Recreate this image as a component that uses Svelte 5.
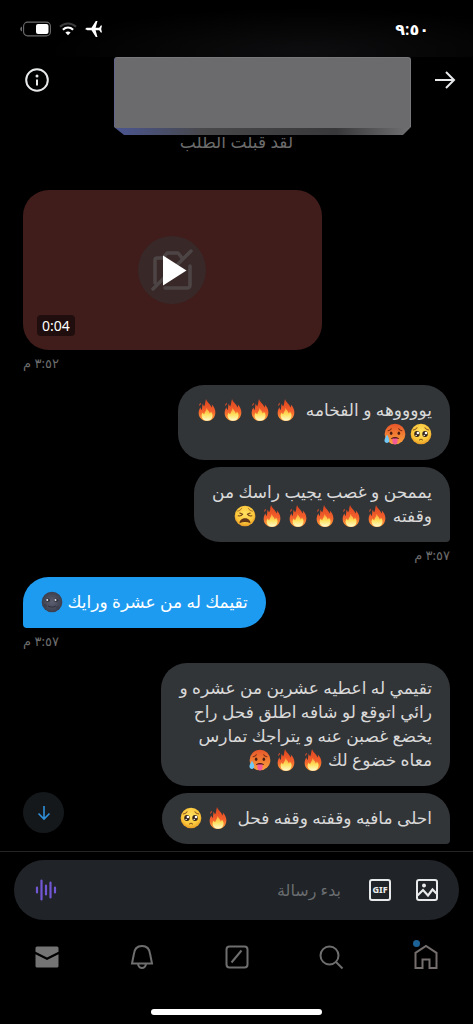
<script lang="ts">
  type Message = {
    side: 'sent' | 'received';
    lines: string[];
    time?: string;
  };

  const messages: Message[] = [
    { side: 'received', lines: ['يووووهه و الفخامه \u00a0🔥 🔥 🔥 🔥', '🥺 🥵'] },
    {
      side: 'received',
      lines: ['يممحن و غصب يجيب راسك من', 'وقفته 🔥 🔥 🔥 🔥 🔥 😩'],
      time: '٣:٥٧ م'
    },
    { side: 'sent', lines: ['تقيمك له من عشرة ورايك 🌚'], time: '٣:٥٧ م' },
    {
      side: 'received',
      lines: [
        'تقيمي له اعطيه عشرين من عشره و',
        'رائي اتوقع لو شافه اطلق فحل راح',
        'يخضع غصبن عنه و يتراجك تمارس',
        'معاه خضوع لك 🔥 🔥 🥵'
      ]
    },
    { side: 'received', lines: ['احلى مافيه وقفته وقفه فحل \u00a0🔥 🥺'], time: '٣:٥٨ م' }
  ];

  let draft = $state('');

  // split a line into plain text and emoji pieces
  function pieces(line: string): string[] {
    return line.split(/(🔥|🥺|🥵|😩|🌚)/u).filter((p) => p !== '');
  }

  const emojis = ['🔥', '🥺', '🥵', '😩', '🌚'];
</script>

<svg class="defs" width="0" height="0" aria-hidden="true">
  <defs>
    <linearGradient id="flame" x1="0" y1="0" x2="0" y2="1">
      <stop offset="0" stop-color="#d9431f" />
      <stop offset="0.55" stop-color="#f4602c" />
      <stop offset="1" stop-color="#fda63a" />
    </linearGradient>
    <linearGradient id="core" x1="0" y1="0" x2="0" y2="1">
      <stop offset="0" stop-color="#fb9a35" />
      <stop offset="0.5" stop-color="#ffdf5a" />
      <stop offset="1" stop-color="#fffbd0" />
    </linearGradient>
    <radialGradient id="yellow" cx="0.5" cy="0.4" r="0.6">
      <stop offset="0" stop-color="#ffe263" />
      <stop offset="0.7" stop-color="#fbc63a" />
      <stop offset="1" stop-color="#e89a25" />
    </radialGradient>
    <linearGradient id="hot" x1="0" y1="0" x2="0" y2="1">
      <stop offset="0" stop-color="#e8552a" />
      <stop offset="1" stop-color="#f9a23c" />
    </linearGradient>
    <radialGradient id="moon" cx="0.5" cy="0.5" r="0.5">
      <stop offset="0" stop-color="#5c5f70" />
      <stop offset="1" stop-color="#3b3e4c" />
    </radialGradient>
  </defs>
</svg>

{#snippet emoji(kind: string)}
  <svg class="emoji" viewBox="0 0 24 24" role="img" aria-label={kind}>
    {#if kind === '🔥'}
      <path fill="url(#flame)" d="M11 0c.5 3.200 4.800 5.200 5.900 9.300.5-.8.700-1.900.3-3.300 2.600 2.500 4.200 5.800 3.900 9.300-.4 5.300-4.100 8.700-9.100 8.700s-8.900-3.400-9.100-8.400c-.1-2.700.9-4.900 2-6.700.1 1.300.4 2.300 1.200 3C7.300 9.500 6.200 8 7.500 5c.2 1.400.5 2.200 1.500 2.900C10.300 5.300 9.900 2.500 11 0z" />
      <path fill="#e8502a" d="M4.900 4.200c.9 1.500-.2 2.300-1 3.600-.6-1.600.1-2.500 1-3.600z" />
      <path fill="url(#core)" d="M11.700 9.500c.2 2.500 3 3.500 3.200 6.200.8-.5 1.200-1.200 1.200-2.200 1.300 1.500 2.300 3 1.900 5.200-.6 3.200-2.900 5.100-6 5.100s-5.600-2-5.900-5.200c-.1-1.600.5-2.900 1.300-4 .3 1 .7 1.500 1.500 1.900.6-2.300 2.300-3.600 2.800-7z" />
    {:else if kind === '🥺'}
      <circle cx="12" cy="12" r="11.300" fill="url(#yellow)" />
      <ellipse cx="7.600" cy="12" rx="3" ry="3.200" fill="#33231b" />
      <ellipse cx="16.400" cy="12" rx="3" ry="3.200" fill="#33231b" />
      <circle cx="8.600" cy="10.900" r="1.400" fill="#fff" />
      <circle cx="17.400" cy="10.900" r="1.400" fill="#fff" />
      <circle cx="6.700" cy="13.500" r=".8" fill="#fff" />
      <circle cx="15.500" cy="13.500" r=".8" fill="#fff" />
      <path d="M3.500 7.700c1.800-.2 3.300-1.200 4.200-2.500M20.500 7.700c-1.800-.2-3.300-1.200-4.200-2.500M10.300 18.600c1-1 2.400-1 3.400 0" fill="none" stroke="#8d561f" stroke-width="1.100" stroke-linecap="round" />
    {:else if kind === '🥵'}
      <circle cx="12" cy="12" r="11.300" fill="url(#hot)" />
      <path d="M4.500 8.500c1.500-.2 2.700-1 3.500-2.200M19.500 8.500c-1.500-.2-2.700-1-3.500-2.200" fill="none" stroke="#7b2c12" stroke-width="1.200" stroke-linecap="round" />
      <ellipse cx="7.800" cy="11.300" rx="1.400" ry="1.900" fill="#4c1d12" />
      <ellipse cx="16.200" cy="11.300" rx="1.400" ry="1.900" fill="#4c1d12" />
      <path d="M7.500 17.500c1.500-2.800 7.500-2.800 9 0z" fill="#5a1d17" />
      <path d="M9.200 17h5.600v3.500c0 3.800-5.600 3.800-5.600 0z" fill="#f25c96" />
      <path d="M3.300 12.500c1.300 2.800 2.500 4.500 2.500 6.700 0 3.500-5.300 3.500-5.300 0 0-2.200 1.500-3.900 2.800-6.700z" fill="#72c8f5" />
    {:else if kind === '😩'}
      <circle cx="12" cy="12" r="11.300" fill="url(#yellow)" />
      <path d="M4 6.700c1.800-.3 3.400-1.300 4.300-2.900M20 6.700c-1.800-.3-3.400-1.300-4.300-2.900" fill="none" stroke="#a06622" stroke-width="1" stroke-linecap="round" />
      <path d="M4.500 11.800c2 .3 3.900-.3 5-1.700L6.300 8.800M19.500 11.800c-2 .3-3.900-.3-5-1.700l3.200-1.300" fill="none" stroke="#6b3d14" stroke-width="1.100" stroke-linecap="round" stroke-linejoin="round" />
      <path d="M6 19.800c.2-7 11.800-7 12 0-3.500-1.600-8.500-1.600-12 0z" fill="#63371a" />
    {:else}
      <circle cx="12" cy="12" r="11.300" fill="url(#moon)" />
      <circle cx="4.500" cy="16" r="1.800" fill="#3c3f4e" />
      <circle cx="18.500" cy="18" r="2" fill="#3c3f4e" />
      <ellipse cx="7.500" cy="10" rx="2.300" ry="1.700" fill="#2c2e3a" />
      <ellipse cx="16.500" cy="10" rx="2.300" ry="1.700" fill="#2c2e3a" />
      <circle cx="6.800" cy="9.800" r="1.100" fill="#e8e8ee" />
      <circle cx="15.800" cy="9.800" r="1.100" fill="#e8e8ee" />
      <path d="M8 16.500c2.300 1.500 5.700 1.500 8 0" fill="none" stroke="#2c2e3a" stroke-width="1" stroke-linecap="round" />
    {/if}
  </svg>
{/snippet}

<div class="app" dir="rtl" lang="ar">
  <div class="status-bar">
    <time class="clock">٩:٥٠</time>
    <div class="status-icons">
      <svg width="18" height="18" viewBox="0 0 18 18" fill="#fff">
        <path d="M.5 9c0-.8.800-1.200 2-1.200h4L10.800 1h1.700l-1.900 6.800h3.600l1.600-2.300H17L16.200 9l.8 3.500h-1.200l-1.600-2.300h-3.600l1.900 6.800h-1.700L6.500 10.200h-4c-1.200 0-2-.4-2-1.200z" />
      </svg>
      <svg width="18" height="14" viewBox="0 0 18 14" fill="none" stroke-width="2.200">
        <path d="M1 4.700c4.600-4.300 11.400-4.300 16 0" stroke="#3c3c3e" />
        <path d="M3.900 7.700c3-2.800 7.200-2.800 10.200 0" stroke="#fff" />
        <path d="M9 13.200L6.400 10.500c1.500-1.300 3.700-1.300 5.200 0z" fill="#fff" />
      </svg>
      <svg width="31" height="16" viewBox="0 0 31 16">
        <rect x="3.600" y="1.100" width="26.800" height="13.800" rx="4" fill="none" stroke="#6c6c6e" stroke-width="1.100" />
        <path d="M2 5.500v5C.8 10 .3 9 .3 8S.8 6 2 5.500z" fill="#6c6c6e" />
        <rect x="16" y="3" width="12.500" height="10" rx="2" fill="#fff" />
      </svg>
    </div>
  </div>

  <header class="header">
    <button class="icon-button" aria-label="رجوع">
      <svg width="24" height="24" viewBox="0 0 24 24" fill="none" stroke="#e7e9ea" stroke-width="2">
        <path d="M2 12h19M13 4l8 8-8 8" />
      </svg>
    </button>
    <div class="name-cover"></div>
    <button class="icon-button" aria-label="معلومات">
      <svg width="26" height="26" viewBox="0 0 26 26">
        <circle cx="13" cy="13" r="10.800" fill="none" stroke="#e7e9ea" stroke-width="2" />
        <circle cx="13" cy="9" r="1.500" fill="#e7e9ea" />
        <path d="M13 12.500v6" stroke="#e7e9ea" stroke-width="2" />
      </svg>
    </button>
  </header>

  <main class="chat">
    <div class="thread">
      <p class="notice">لقد قبلت الطلب</p>

      <div class="row sent">
        <button class="video" aria-label="تشغيل الفيديو">
          <span class="play">
            <svg width="68" height="68" viewBox="0 0 68 68">
              <g fill="none" stroke="#4d4545" stroke-width="3.500" stroke-linecap="round" stroke-linejoin="round">
                <path d="M17 47V24q0-2 2-2h6l4-5h11l4 5M52 30v19q0 3-3 3H27M15 53l38-38" />
              </g>
              <path d="M25 19.500v30L48.500 34.500z" fill="#fff" />
            </svg>
          </span>
          <span class="duration" dir="ltr">0:04</span>
        </button>
        <time class="time">٣:٥٢ م</time>
      </div>

      {#each messages as message}
        <div class="row {message.side}">
          <div class="bubble" class:tail={message.time}>
            {#each message.lines as line}
              <div class="line">{#each pieces(line) as piece}{#if emojis.includes(piece)}{@render emoji(piece)}{:else}{piece}{/if}{/each}</div>
            {/each}
          </div>
          {#if message.time}
            <time class="time">{message.time}</time>
          {/if}
        </div>
      {/each}
    </div>

    <button class="scroll-down" aria-label="أحدث الرسائل">
      <svg width="14" height="16" viewBox="0 0 14 16" fill="none" stroke="#2f8fd8" stroke-width="1.600">
        <path d="M7 1v13M1.500 8.500L7 14l5.500-5.500" />
      </svg>
    </button>
  </main>

  <form class="composer" onsubmit={(e) => e.preventDefault()}>
    <div class="field">
      <button type="button" class="tool" aria-label="صورة">
        <svg width="24" height="24" viewBox="0 0 24 24" fill="none" stroke="#e7e9ea" stroke-width="2">
          <rect x="2" y="2" width="20" height="20" rx="2" />
          <path d="M2.500 17.500L8 12l5 5.500 4.500-6 4.500 4.500" stroke-width="2.200" />
          <circle cx="9" cy="7.500" r="2" fill="#e7e9ea" stroke="none" />
        </svg>
      </button>
      <button type="button" class="tool gif" aria-label="GIF"><span>GIF</span></button>
      <input type="text" placeholder="بدء رسالة" aria-label="بدء رسالة" bind:value={draft} />
      <button type="button" class="tool" aria-label="رسالة صوتية">
        <svg width="24" height="24" viewBox="0 0 24 24" stroke="#7257d4" stroke-width="2.200" stroke-linecap="round">
          <path d="M3 9.500v5M7.500 2.500v19M12 7.500v9M16.500 4.500v15M21 9.500v5" />
        </svg>
      </button>
    </div>
  </form>

  <nav class="tabs">
    <a href="#home" aria-label="الرئيسية">
      <span class="home">
        <svg width="26" height="26" viewBox="0 0 26 26" fill="none" stroke="#746e6c" stroke-width="2">
          <path d="M2.500 24V8.800L13 2l10.500 6.800V24h-7v-8.500h-7V24z" />
        </svg>
        <span class="dot"></span>
      </span>
    </a>
    <a href="#search" aria-label="بحث">
      <svg width="26" height="26" viewBox="0 0 26 26" fill="none" stroke="#6e6e6e" stroke-width="2">
        <circle cx="11.500" cy="11.500" r="9" />
        <path d="M18 18l6.500 6.500" />
      </svg>
    </a>
    <a href="#spaces" aria-label="المساحات">
      <svg width="26" height="26" viewBox="0 0 26 26" fill="none" stroke="#6e6e6e" stroke-width="2">
        <rect x="2.500" y="2.500" width="21" height="21" rx="3" />
        <path d="M7.500 18.500l10-12" />
      </svg>
    </a>
    <a href="#notifications" aria-label="التنبيهات">
      <svg width="26" height="26" viewBox="0 0 26 26" fill="none" stroke="#6e6e6e" stroke-width="2">
        <path d="M3 19.500L4.800 10.500C5.300 5 8.500 2 13 2s7.700 3 8.200 8.500l1.800 9zM9 20c.5 2.500 2 4 4 4s3.500-1.500 4-4" />
      </svg>
    </a>
    <a href="#messages" aria-label="الرسائل">
      <svg width="26" height="26" viewBox="0 0 26 26" fill="#747474">
        <path d="M1.500 4q0-1.500 1.500-1.500h20q1.500 0 1.500 1.500v3.800L13 13.500 1.500 7.800z" />
        <path d="M1.500 10.300L13 16l11.500-5.700V22q0 1.500-1.500 1.500H3Q1.500 23.500 1.500 22z" />
      </svg>
    </a>
  </nav>

  <div class="home-indicator"></div>
</div>

<style>
  :global(body) {
    background: #000;
  }

  .defs {
    position: absolute;
  }

  .app {
    display: flex;
    flex-direction: column;
    height: 100vh;
    background: #000;
    color: #d9d9d9;
    font-family: 'Noto Sans', 'DejaVu Sans', sans-serif;
    overflow: hidden;
  }

  button {
    padding: 0;
    border: 0;
    background: none;
    color: inherit;
    font-family: inherit;
    cursor: pointer;
  }

  svg {
    display: block;
  }

  .status-bar {
    display: flex;
    flex: none;
    align-items: center;
    justify-content: space-between;
    height: 57px;
    padding: 0 44px 0 20px;
    box-sizing: border-box;
    background: radial-gradient(ellipse at 65% 90%, #0d0d0f, #000 60%);
  }

  .clock {
    color: #fff;
    font-size: 16px;
    font-weight: 600;
  }

  .status-icons {
    display: flex;
    align-items: center;
    gap: 8px;
  }

  .header {
    display: flex;
    flex: none;
    align-items: flex-start;
    padding: 0 16px 2px 24px;
  }

  .icon-button {
    display: flex;
    align-items: center;
    height: 46px;
  }

  .name-cover {
    flex: 1;
    height: 78px;
    margin: 0 22px 0 64px;
    background: linear-gradient(#6b6b6e 70px, transparent 70px), linear-gradient(90deg, #4a5590, #48484a 30%, #38383a 75%, #707072);
    border: 1px solid #77777c;
    border-width: 1px 1px 0;
    border-left-color: #62668c;
    border-radius: 3px 3px 0 0;
    box-sizing: border-box;
    clip-path: polygon(0 0, 100% 0, 100% 70px, calc(100% - 8px) 100%, 10px 100%, 0 70px);
  }

  .chat {
    position: relative;
    flex: 1;
    min-height: 0;
    overflow: hidden;
  }

  .thread {
    display: flex;
    flex-direction: column;
    padding: 0 23px;
  }

  .notice {
    margin: 0 0 43px;
    color: #6c6c6c;
    font-size: 17px;
    line-height: 10px;
    text-align: center;
  }

  .row {
    display: flex;
    flex-direction: column;
    align-items: flex-start;
    margin-bottom: 7px;
  }

  .row:has(.time) {
    margin-bottom: 12px;
  }

  .sent {
    align-items: flex-end;
  }

  .video {
    display: grid;
    place-items: center;
    position: relative;
    width: 70%;
    height: 160px;
    border-radius: 26px;
    background: #401d1b;
  }

  .play {
    border-radius: 50%;
    background: #382828;
  }

  .duration {
    position: absolute;
    bottom: 14px;
    left: 14px;
    padding: 0 5px;
    border-radius: 4px;
    background: #200e0e;
    color: #fff;
    font-size: 14px;
    line-height: 21px;
  }

  .bubble {
    padding: 13px 18px 14px;
    border-radius: 26px;
    background: #323538;
    color: #d9d9d9;
    font-size: 17px;
    line-height: 24px;
  }

  .received .tail {
    border-bottom-right-radius: 4px;
  }

  .sent .bubble {
    background: #1d9bf0;
    color: #fff;
  }

  .sent .tail {
    border-bottom-left-radius: 4px;
  }

  .line {
    height: 24px;
    white-space: nowrap;
  }

  .emoji {
    display: inline-block;
    width: 22px;
    height: 22px;
    vertical-align: -5px;
  }

  .time {
    margin-top: 3px;
    color: #6c6c6c;
    font-size: 13px;
    line-height: 20px;
  }

  .scroll-down {
    position: absolute;
    bottom: 18px;
    left: 23px;
    display: grid;
    place-items: center;
    width: 41px;
    height: 41px;
    border-radius: 50%;
    background: #15181b;
  }

  .composer {
    flex: none;
    padding: 8px 14px 0;
    border-top: 1px solid #242424;
  }

  .field {
    display: flex;
    align-items: center;
    gap: 23px;
    height: 60px;
    padding: 0 20px;
    border-radius: 30px;
    background: #202327;
  }

  .tool {
    flex: none;
  }

  .gif {
    width: 24px;
    height: 24px;
    padding: 1px;
  }

  .gif span {
    display: block;
    border: 2px solid #e7e9ea;
    border-radius: 3px;
    color: #e7e9ea;
    font-size: 9px;
    font-weight: 800;
    line-height: 18px;
    text-align: center;
  }

  input {
    flex: 1;
    min-width: 0;
    padding: 0;
    margin-right: 4px;
    border: 0;
    outline: 0;
    background: none;
    color: #e7e9ea;
    font-family: inherit;
    font-size: 16px;
  }

  input::placeholder {
    color: #6a6d70;
    opacity: 1;
  }

  .tabs {
    display: flex;
    flex: none;
    height: 74px;
  }

  .tabs a {
    display: grid;
    flex: 1;
    place-items: center;
  }

  .home {
    position: relative;
  }

  .dot {
    position: absolute;
    top: -4px;
    left: 0;
    width: 7px;
    height: 7px;
    border-radius: 50%;
    background: #1c6296;
  }

  .home-indicator {
    flex: none;
    width: 36%;
    height: 6px;
    margin: 15px auto 9px;
    border-radius: 3px;
    background: #fff;
  }
</style>
